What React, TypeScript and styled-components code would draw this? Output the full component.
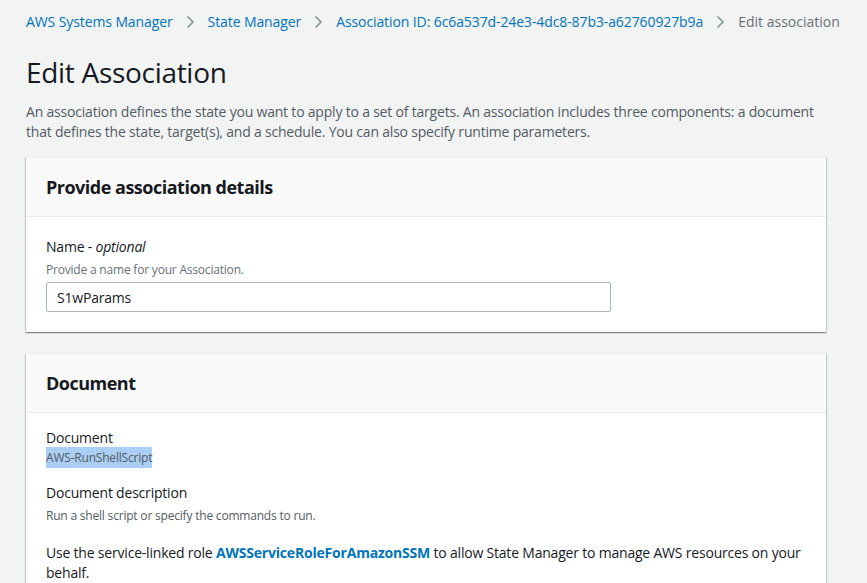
import * as React from 'react'
import styled, { createGlobalStyle } from 'styled-components'

const GlobalStyle = createGlobalStyle`
  html, body {
    margin: 0;
    padding: 0;
    background: #f2f3f3;
  }
  body {
    font-family: "Open Sans", "Noto Sans", Arial, sans-serif;
    color: #16191f;
    letter-spacing: -0.2px;
    -webkit-font-smoothing: antialiased;
  }
`

const Page = styled.div`
  padding: 12px 41px 20px 26px;
  height: 583px;
  box-sizing: border-box;
  overflow: hidden;
`

const Crumbs = styled.nav`
  display: flex;
  align-items: center;
  font-size: 14px;
  line-height: 20px;
  letter-spacing: 0;
  white-space: nowrap;
`

const Crumb = styled.a<{ current?: boolean }>`
  color: ${(p) => (p.current ? '#687078' : '#0073bb')};
  letter-spacing: ${(p) => (p.current ? '0' : '-0.1px')};
  text-decoration: none;
`

const Chevron = styled.span`
  display: inline-flex;
  margin: 0 13px;
  color: #879596;
`

const Title = styled.h1`
  margin: 22px 0 12px;
  font-size: 28px;
  line-height: 36px;
  font-weight: 400;
  letter-spacing: -0.3px;
  color: #16191f;
`

const Lead = styled.p`
  margin: 0 0 15px;
  font-size: 14px;
  line-height: 20px;
  color: #545b64;
`

const Card = styled.section`
  background: #fff;
  margin-bottom: 21px;
  box-shadow: 0 1px 1px 0 rgba(0, 28, 36, 0.3), 1px 1px 1px 0 rgba(0, 28, 36, 0.15),
    -1px 1px 1px 0 rgba(0, 28, 36, 0.15);
  border-top: 1px solid #eaeded;
`

const CardHeader = styled.header`
  background: #fafafa;
  border-bottom: 1px solid #eaeded;
  padding: 0 20px;
  height: 58px;
  display: flex;
  align-items: center;
`

const CardTitle = styled.h2`
  margin: 0;
  font-size: 18px;
  line-height: 22px;
  font-weight: 700;
  letter-spacing: -0.5px;
  color: #16191f;
`

const CardBody = styled.div<{ top?: number }>`
  padding: ${(p) => p.top ?? 20}px 20px 20px;
`

const Label = styled.div`
  font-size: 14px;
  line-height: 20px;
  color: #16191f;

  em {
    font-style: italic;
  }
`

const Hint = styled.div`
  font-size: 12px;
  line-height: 16px;
  color: #687078;
  margin: 5px 0 4px;
`

const Input = styled.input`
  display: block;
  box-sizing: border-box;
  width: 565px;
  height: 30px;
  padding: 4px 10px;
  border: 1px solid #aab7b8;
  border-radius: 2px;
  font-family: inherit;
  font-size: 14px;
  letter-spacing: -0.2px;
  color: #16191f;
  background: #fff;
  outline: none;
`

const Field = styled.div<{ gap?: number }>`
  margin-bottom: ${(p) => p.gap ?? 0}px;
`

const Value = styled.div<{ offset?: number }>`
  margin-top: ${(p) => p.offset ?? 0}px;
  font-size: 12px;
  line-height: 20px;
  color: #545b64;
`

const Selected = styled.span`
  background: #aacef4;
  padding: 2px 0;
`

const Text = styled.p`
  margin: 0;
  font-size: 14px;
  line-height: 20px;
  color: #16191f;
`

const RoleLink = styled.a`
  color: #0073bb;
  font-weight: 700;
  text-decoration: none;
`

const ChevronIcon = () => (
  <svg width="9" height="14" viewBox="0 0 9 14" fill="none">
    <path d="M1.5 1.5 7 7l-5.5 5.5" stroke="currentColor" strokeWidth="1.6" />
  </svg>
)

export default function App() {
  return (
    <>
      <GlobalStyle />
      <Page>
        <Crumbs>
          <Crumb href="#">AWS Systems Manager</Crumb>
          <Chevron><ChevronIcon /></Chevron>
          <Crumb href="#">State Manager</Crumb>
          <Chevron><ChevronIcon /></Chevron>
          <Crumb href="#">Association ID: 6c6a537d-24e3-4dc8-87b3-a62760927b9a</Crumb>
          <Chevron><ChevronIcon /></Chevron>
          <Crumb current>Edit association</Crumb>
        </Crumbs>

        <Title>Edit Association</Title>
        <Lead>
          An association defines the state you want to apply to a set of targets. An association includes three
          components: a document that defines the state, target(s), and a schedule. You can also specify runtime
          parameters.
        </Lead>

        <Card>
          <CardHeader>
            <CardTitle>Provide association details</CardTitle>
          </CardHeader>
          <CardBody>
            <Label>Name - <em>optional</em></Label>
            <Hint>Provide a name for your Association.</Hint>
            <Input defaultValue="S1wParams" />
          </CardBody>
        </Card>

        <Card>
          <CardHeader>
            <CardTitle>Document</CardTitle>
          </CardHeader>
          <CardBody top={15}>
            <Field gap={15}>
              <Label>Document</Label>
              <Value><Selected>AWS-RunShellScript</Selected></Value>
            </Field>
            <Field gap={17}>
              <Label>Document description</Label>
              <Value offset={3}>Run a shell script or specify the commands to run.</Value>
            </Field>
            <Text>
              Use the service-linked role <RoleLink href="#">AWSServiceRoleForAmazonSSM</RoleLink> to allow State
              Manager to manage AWS resources on your behalf.
            </Text>
          </CardBody>
        </Card>
      </Page>
    </>
  )
}
